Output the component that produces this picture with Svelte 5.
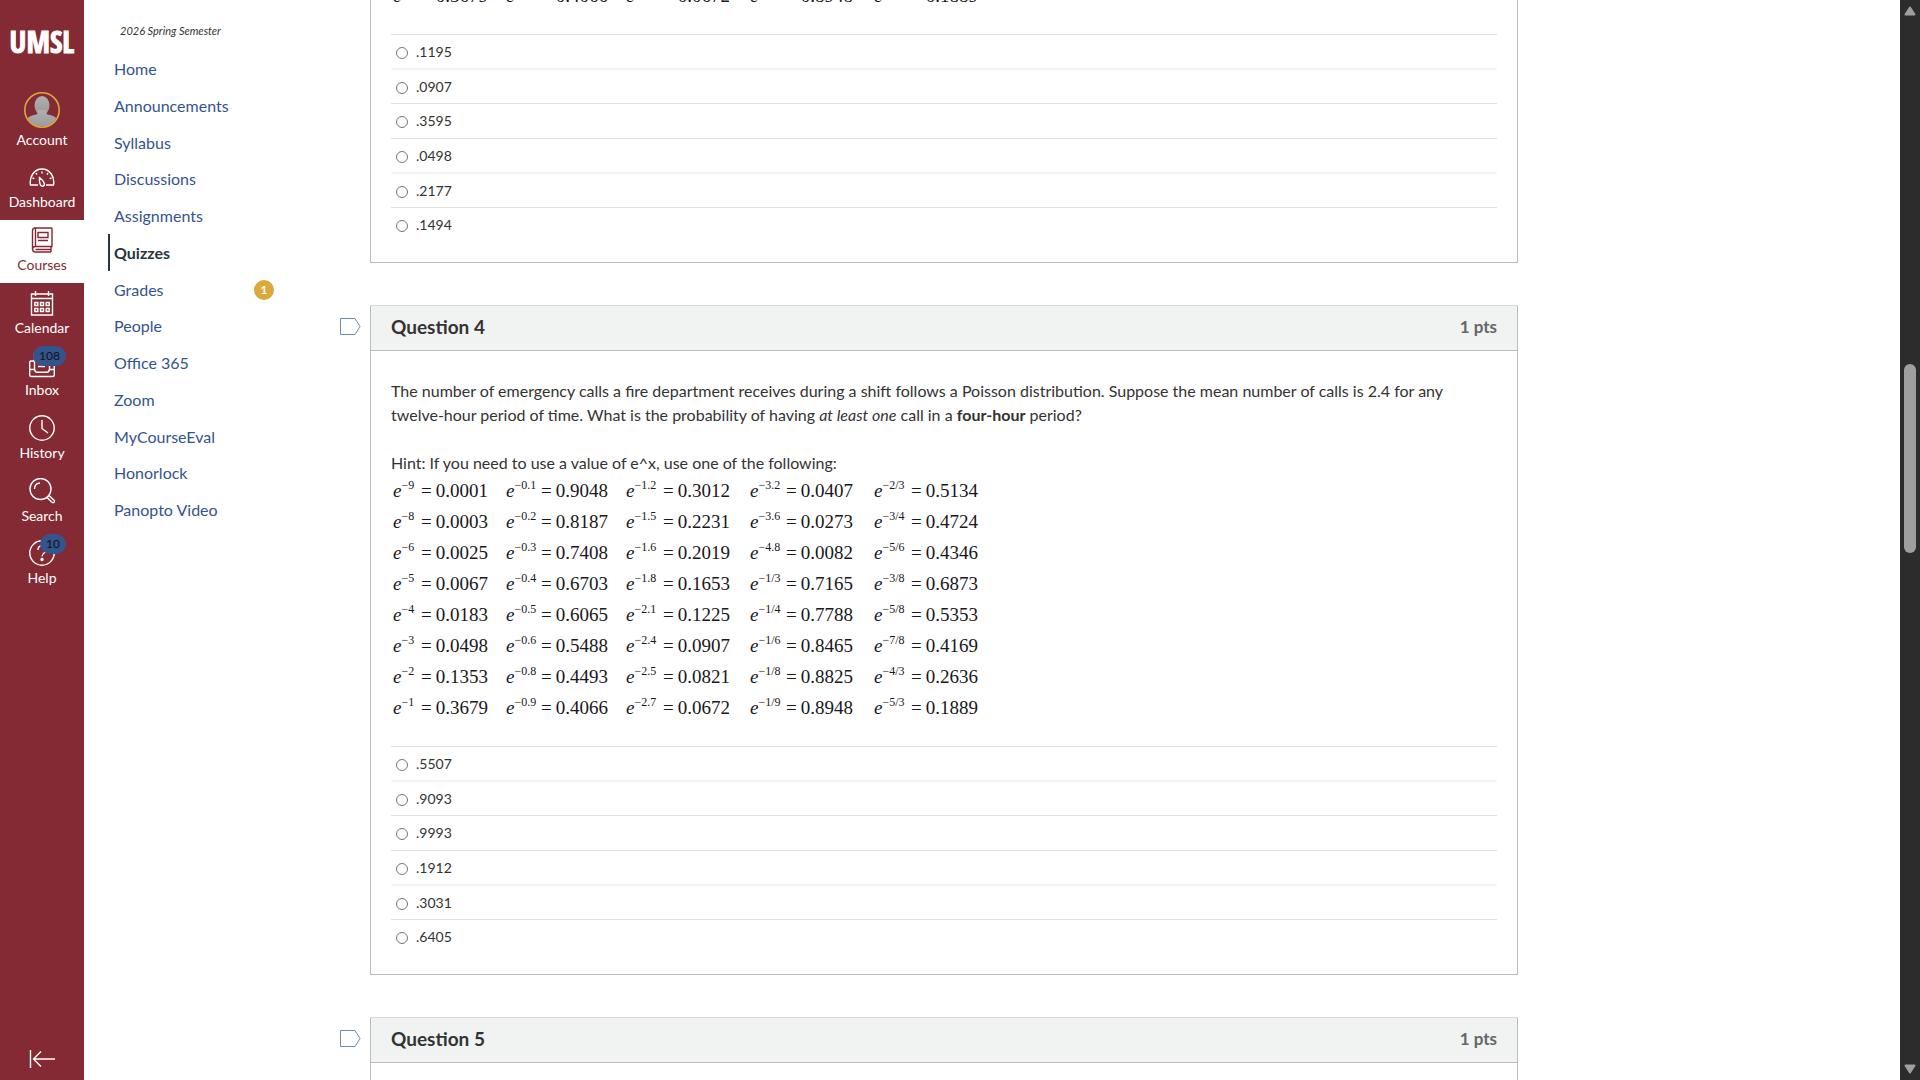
<script>
  const navItems = [
    { id: 'dashboard', label: 'Dashboard' },
    { id: 'courses', label: 'Courses', active: true },
    { id: 'calendar', label: 'Calendar' },
    { id: 'inbox', label: 'Inbox', badge: 108 },
    { id: 'history', label: 'History' },
    { id: 'search', label: 'Search' },
    { id: 'help', label: 'Help', badge: 10 }
  ];

  const courseLinks = [
    { label: 'Home' },
    { label: 'Announcements' },
    { label: 'Syllabus' },
    { label: 'Discussions' },
    { label: 'Assignments' },
    { label: 'Quizzes', active: true },
    { label: 'Grades', count: 1 },
    { label: 'People' },
    { label: 'Office 365' },
    { label: 'Zoom' },
    { label: 'MyCourseEval' },
    { label: 'Honorlock' },
    { label: 'Panopto Video' }
  ];

  const powers = [
    [['9', '0.0001'], ['0.1', '0.9048'], ['1.2', '0.3012'], ['3.2', '0.0407'], ['2/3', '0.5134']],
    [['8', '0.0003'], ['0.2', '0.8187'], ['1.5', '0.2231'], ['3.6', '0.0273'], ['3/4', '0.4724']],
    [['6', '0.0025'], ['0.3', '0.7408'], ['1.6', '0.2019'], ['4.8', '0.0082'], ['5/6', '0.4346']],
    [['5', '0.0067'], ['0.4', '0.6703'], ['1.8', '0.1653'], ['1/3', '0.7165'], ['3/8', '0.6873']],
    [['4', '0.0183'], ['0.5', '0.6065'], ['2.1', '0.1225'], ['1/4', '0.7788'], ['5/8', '0.5353']],
    [['3', '0.0498'], ['0.6', '0.5488'], ['2.4', '0.0907'], ['1/6', '0.8465'], ['7/8', '0.4169']],
    [['2', '0.1353'], ['0.8', '0.4493'], ['2.5', '0.0821'], ['1/8', '0.8825'], ['4/3', '0.2636']],
    [['1', '0.3679'], ['0.9', '0.4066'], ['2.7', '0.0672'], ['1/9', '0.8948'], ['5/3', '0.1889']]
  ];

  const answers3 = ['.1195', '.0907', '.3595', '.0498', '.2177', '.1494'];
  const answers4 = ['.5507', '.9093', '.9993', '.1912', '.3031', '.6405'];

  const scroll = { before: 364, thumb: 189, after: 527 };
</script>

{#snippet icon(id)}
  <svg class="icon" viewBox="0 0 26 26" aria-hidden="true">
    {#if id === 'dashboard'}
      <path d="M9 21H1.500C0 13 5 5 13 5s13 8 11.500 16H17" />
      <path d="M10.500 13.500c2 1.500 4.500 4 5 6.500.2 2-2.500 3-3.800 1.200-1.200-1.800-1.400-5-1.200-7.700z" />
      <path d="M13 7.500v2M7 9l1 1.500M3.500 14l1.800.7M19 9l-1 1.500M22.500 14l-1.800.7" />
    {:else if id === 'courses'}
      <path d="M23 1H6C4 1 3.500 2.500 3.500 4v18c0 2 1 3 3 3H22M23 1v18.500H6.500c-2 0-3 1-3 2.500M6.500 1v18.500M22 19.500V25M6.500 22.500H22" />
      <path d="M9 5.500h10v5H9zM9 13.500h10" />
    {:else if id === 'calendar'}
      <path d="M2.500 4h21v21h-21zM2.500 8.500h21M6.500 1v5M19.500 1v5" />
      <path d="M5.800 12.500h3v3h-3zM11.500 12.500h3v3h-3zM17.200 12.500h3v3h-3zM5.800 18.500h3v3h-3zM11.500 18.500h3v3h-3zM17.200 18.500h3v3h-3z" />
    {:else if id === 'inbox'}
      <path d="M5.500 18V1.500h15V18M5.500 9H2c-1 0-1.300.6-1.300 1.500V23c0 1 .5 1.500 1.500 1.500h21.600c1 0 1.500-.5 1.500-1.500V10.500c0-1-.3-1.500-1.300-1.500h-3.500" />
      <path d="M.7 17.500h4.800c.5 2 1 2.700 2.500 2.700h10c1.500 0 2-.7 2.500-2.700h4.800M9 10h8M9 14.500h7" />
    {:else if id === 'history'}
      <circle cx="13" cy="13" r="12.200" />
      <path d="M13 5v8.500l6 4.500" />
    {:else if id === 'search'}
      <circle cx="11.500" cy="11" r="10.500" />
      <path d="M5.500 11c0-3.500 2-5.700 5.500-6M18 19.500l5.300 5c1 .8 3-.8 2-2L20 17.500z" />
    {:else}
      <circle cx="13" cy="13" r="12.200" />
      <path d="M9 10c0-6 8.500-5.500 8.500-.5 0 3.500-4.500 3-4.500 7" />
      <circle class="dot" cx="13" cy="19.500" r="1" />
    {/if}
  </svg>
{/snippet}

{#snippet powerTable(rows)}
  <table class="powers">
    <colgroup>
      <col class="p1" /><col class="v1" />
      <col class="p2" /><col class="v2" />
      <col class="p3" /><col class="v3" />
      <col class="p4" /><col class="v4" />
      <col class="p5" /><col class="v5" />
    </colgroup>
    <tbody>
      {#each rows as row}
        <tr>
          {#each row as [exponent, value]}
            <td><i>e</i><sup>−{exponent}</sup></td>
            <td><span class="equals">=</span>{value}</td>
          {/each}
        </tr>
      {/each}
    </tbody>
  </table>
{/snippet}

{#snippet answerList(name, options)}
  <ul class="answers">
    {#each options as option, i}
      <li>
        <input type="radio" {name} id="{name}-{i}" value={option} />
        <label for="{name}-{i}">{option}</label>
      </li>
    {/each}
  </ul>
{/snippet}

{#snippet flag(number)}
  <button class="flag" aria-label="Flag question {number}">
    <svg viewBox="0 0 21 17" aria-hidden="true"><path d="M.5.500H15L20 8.500 15 16.500H.5z" /></svg>
  </button>
{/snippet}

<div class="app">
  <nav class="global" aria-label="Global navigation">
    <a class="logo" href="#umsl">UMSL</a>
    <a class="item account" href="#account">
      <svg class="avatar" viewBox="0 0 36 36" aria-hidden="true">
        <defs>
          <clipPath id="avatar-clip"><circle cx="18" cy="18" r="16.500" /></clipPath>
          <linearGradient id="avatar-fill" x1="0" y1="0" x2="0" y2="1">
            <stop offset="0" stop-color="#b0b0b0" />
            <stop offset="1" stop-color="#999" />
          </linearGradient>
        </defs>
        <g clip-path="url(#avatar-clip)" fill="url(#avatar-fill)">
          <ellipse cx="18" cy="13.500" rx="7.500" ry="9.500" />
          <path d="M13.500 18h9v4c4 1.500 9 1.500 11 6v8h-31v-8c2-4.500 7-4.500 11-6z" />
        </g>
        <circle class="ring" cx="18" cy="18" r="17.200" />
      </svg>
      <span>Account</span>
    </a>
    {#each navItems as item}
      <a class="item" class:active={item.active} href="#{item.id}">
        {@render icon(item.id)}
        <span>{item.label}</span>
        {#if item.badge}<b class="badge">{item.badge}</b>{/if}
      </a>
    {/each}
    <button class="collapse" aria-label="Minimize global navigation">
      <svg class="icon" viewBox="0 0 26 26" aria-hidden="true"><path d="M1.500 4v18M26 13H5M12 5.500L4.500 13l7.500 7.500" /></svg>
    </button>
  </nav>

  <nav class="course" aria-label="Course navigation">
    <p>2026 Spring Semester</p>
    <ul>
      {#each courseLinks as link}
        <li>
          <a class:active={link.active} href="#{link.label}">
            {link.label}
            {#if link.count}<span class="count">{link.count}</span>{/if}
          </a>
        </li>
      {/each}
    </ul>
  </nav>

  <main>
    <section class="question">
      <div class="box first">
        <div class="clipped">{@render powerTable(powers.slice(7))}</div>
        {@render answerList('question-3', answers3)}
      </div>
    </section>

    <section class="question">
      {@render flag(4)}
      <div class="box">
        <header><h2>Question 4</h2><span>1 pts</span></header>
        <div class="body">
          <p>
            The number of emergency calls a fire department receives during a shift follows a Poisson
            distribution. Suppose the mean number of calls is 2.4 for any twelve-hour period of time. What is
            the probability of having <em>at least one</em> call in a <strong>four-hour</strong> period?
          </p>
          <p>Hint: If you need to use a value of e^x, use one of the following:</p>
          {@render powerTable(powers)}
        </div>
        {@render answerList('question-4', answers4)}
      </div>
    </section>

    <section class="question">
      {@render flag(5)}
      <div class="box">
        <header><h2>Question 5</h2><span>1 pts</span></header>
        <div class="body"></div>
      </div>
    </section>
  </main>

  <div class="scrollbar" aria-hidden="true">
    <svg viewBox="0 0 12 10"><path d="M6 1.500L10.500 8.500H1.500z" /></svg>
    <div class="track">
      <div style:flex-grow={scroll.before}></div>
      <div class="thumb" style:flex-grow={scroll.thumb}></div>
      <div style:flex-grow={scroll.after}></div>
    </div>
    <svg viewBox="0 0 12 10"><path d="M6 8.500L1.500 1.500h9z" /></svg>
  </div>
</div>

<style>
  :global(body) {
    background: #fff;
    overflow: hidden;
  }

  .app {
    display: flex;
    height: 100vh;
    overflow: hidden;
    color: #333;
    font: 16px/24px Lato, 'Liberation Sans', sans-serif;
  }

  p, ul, h2 {
    margin: 0;
    padding: 0;
  }

  ul {
    list-style: none;
  }

  a {
    text-decoration: none;
  }

  button {
    padding: 0;
    border: 0;
    background: none;
    cursor: pointer;
  }

  /* Global navigation */
  .global {
    display: flex;
    flex: none;
    flex-direction: column;
    width: 84px;
    background: #842a34;
  }

  .logo {
    display: flex;
    align-items: center;
    justify-content: center;
    height: 84px;
    color: #fff;
    font: bold 30px/32px 'Liberation Sans Narrow', 'Open Sans Condensed', 'Roboto Condensed', 'Liberation Sans', sans-serif;
    -webkit-text-stroke: 1px #fff;
  }

  .item {
    position: relative;
    display: flex;
    flex-direction: column;
    align-items: center;
    gap: 4px;
    box-sizing: border-box;
    height: 63px;
    padding-top: 7px;
    color: #fff;
    font-size: 14px;
    line-height: 16px;
  }

  .item:nth-child(3n + 5) {
    height: 62px;
  }

  .account {
    height: 73px;
    padding-top: 8px;
  }

  .active.item {
    background: #fff;
    color: #842a34;
  }

  .icon {
    width: 26px;
    height: 26px;
    fill: none;
    stroke: currentColor;
    stroke-width: 1.4;
  }

  .icon .dot {
    fill: currentColor;
  }

  .avatar {
    width: 36px;
    height: 36px;
  }

  .ring {
    fill: none;
    stroke: #dba93a;
    stroke-width: 1.6;
  }

  .badge {
    position: absolute;
    top: 1px;
    right: 18px;
    padding: 0 6px;
    border-radius: 10px;
    background: #34548e;
    color: #111;
    font-weight: 400;
    font-size: 12px;
    line-height: 20px;
  }

  .collapse {
    margin: auto 0 8px;
    color: #fff;
    line-height: 0;
  }

  /* Course navigation */
  .course {
    flex: none;
    box-sizing: border-box;
    width: 256px;
    padding: 19px 66px 0 24px;
  }

  .course p {
    margin: 0 0 7px 12px;
    font-style: italic;
    font-size: 11px;
  }

  .course a {
    display: flex;
    align-items: center;
    justify-content: space-between;
    height: 37px;
    padding-left: 4px;
    border-left: 2px solid transparent;
    color: #34548e;
  }

  .course li:nth-child(4n) a {
    height: 36px;
  }

  .course .active {
    border-color: #273540;
    color: #273540;
    font-weight: 700;
  }

  .count {
    width: 20px;
    border-radius: 10px;
    background: #dba93a;
    color: #fff;
    font-weight: 700;
    font-size: 12px;
    line-height: 20px;
    text-align: center;
  }

  /* Quiz */
  main {
    display: flex;
    flex: 1;
    flex-direction: column;
    gap: 42px;
    min-width: 0;
    padding-right: 382px;
  }

  .question {
    display: flex;
  }

  .flag {
    align-self: flex-start;
    width: 21px;
    height: 17px;
    margin: 13px -21px 0 0;
    line-height: 0;
  }

  .flag svg {
    width: 21px;
    height: 17px;
    fill: none;
    stroke: #6f8cae;
  }

  .box {
    flex: 1;
    margin-left: 30px;
    padding-bottom: 20px;
    border: 1px solid #bbb;
    border-top-color: #d8d8d8;
  }

  .first {
    border-top: 0;
  }

  .clipped {
    display: flex;
    flex-direction: column;
    justify-content: flex-end;
    height: 11px;
    margin: 0 20px 23px;
    overflow: hidden;
  }

  header {
    display: flex;
    align-items: center;
    justify-content: space-between;
    box-sizing: border-box;
    height: 45px;
    padding: 0 20px 2px;
    border-bottom: 1px solid #bbb;
    background: #f1f3f2;
  }

  h2 {
    font-size: 19px;
    line-height: 24px;
  }

  header span {
    color: #666;
    font-weight: 700;
    font-size: 17px;
  }

  .body {
    padding: 28px 20px 23px;
  }

  .body p + p {
    margin-top: 24px;
  }

  .powers {
    table-layout: fixed;
    width: 592px;
    border-collapse: collapse;
    color: #1a1622;
    font: 19px/20px 'Liberation Serif', serif;
  }

  .p1 { width: 28px; }
  .v1 { width: 85px; }
  .p2 { width: 35px; }
  .v2 { width: 85px; }
  .p3 { width: 37px; }
  .v3 { width: 87px; }
  .p4 { width: 36px; }
  .v4 { width: 88px; }
  .p5 { width: 37px; }
  .v5 { width: 74px; }

  .powers td {
    height: 31px;
    padding: 0 0 0 2px;
    line-height: 31px;
    white-space: nowrap;
  }

  .powers sup {
    font-size: 12px;
    line-height: 0;
    vertical-align: 8px;
  }

  .equals {
    margin-right: 4px;
  }

  .answers {
    margin: 0 20px;
    font-size: 14px;
  }

  .answers li {
    display: flex;
    align-items: center;
    gap: 8px;
    height: 33px;
    padding-left: 5px;
    border-top: 1px solid #e1e1e1;
  }

  .answers li:nth-child(3n + 2) {
    border-top: 2px solid #f4f4f4;
  }

  .answers li:nth-child(3n) {
    height: 34px;
  }

  .answers input {
    appearance: none;
    width: 12px;
    height: 12px;
    margin: 2px 0 0;
    border: 1px solid #767676;
    border-radius: 50%;
    background: #fff;
  }

  .answers input:checked {
    border: 4px solid #34548e;
  }

  /* Scrollbar */
  .scrollbar {
    display: flex;
    flex: none;
    flex-direction: column;
    align-items: center;
    box-sizing: border-box;
    width: 20px;
    padding: 6px 0;
    background: #2c2c2c;
  }

  .scrollbar svg {
    width: 12px;
    height: 10px;
    fill: #9f9f9f;
    stroke: #9f9f9f;
    stroke-width: 2;
    stroke-linejoin: round;
  }

  .track {
    display: flex;
    flex: 1;
    flex-direction: column;
    margin: -16px 0;
  }

  .thumb {
    width: 12px;
    border-radius: 6px;
    background: #9f9f9f;
  }
</style>
